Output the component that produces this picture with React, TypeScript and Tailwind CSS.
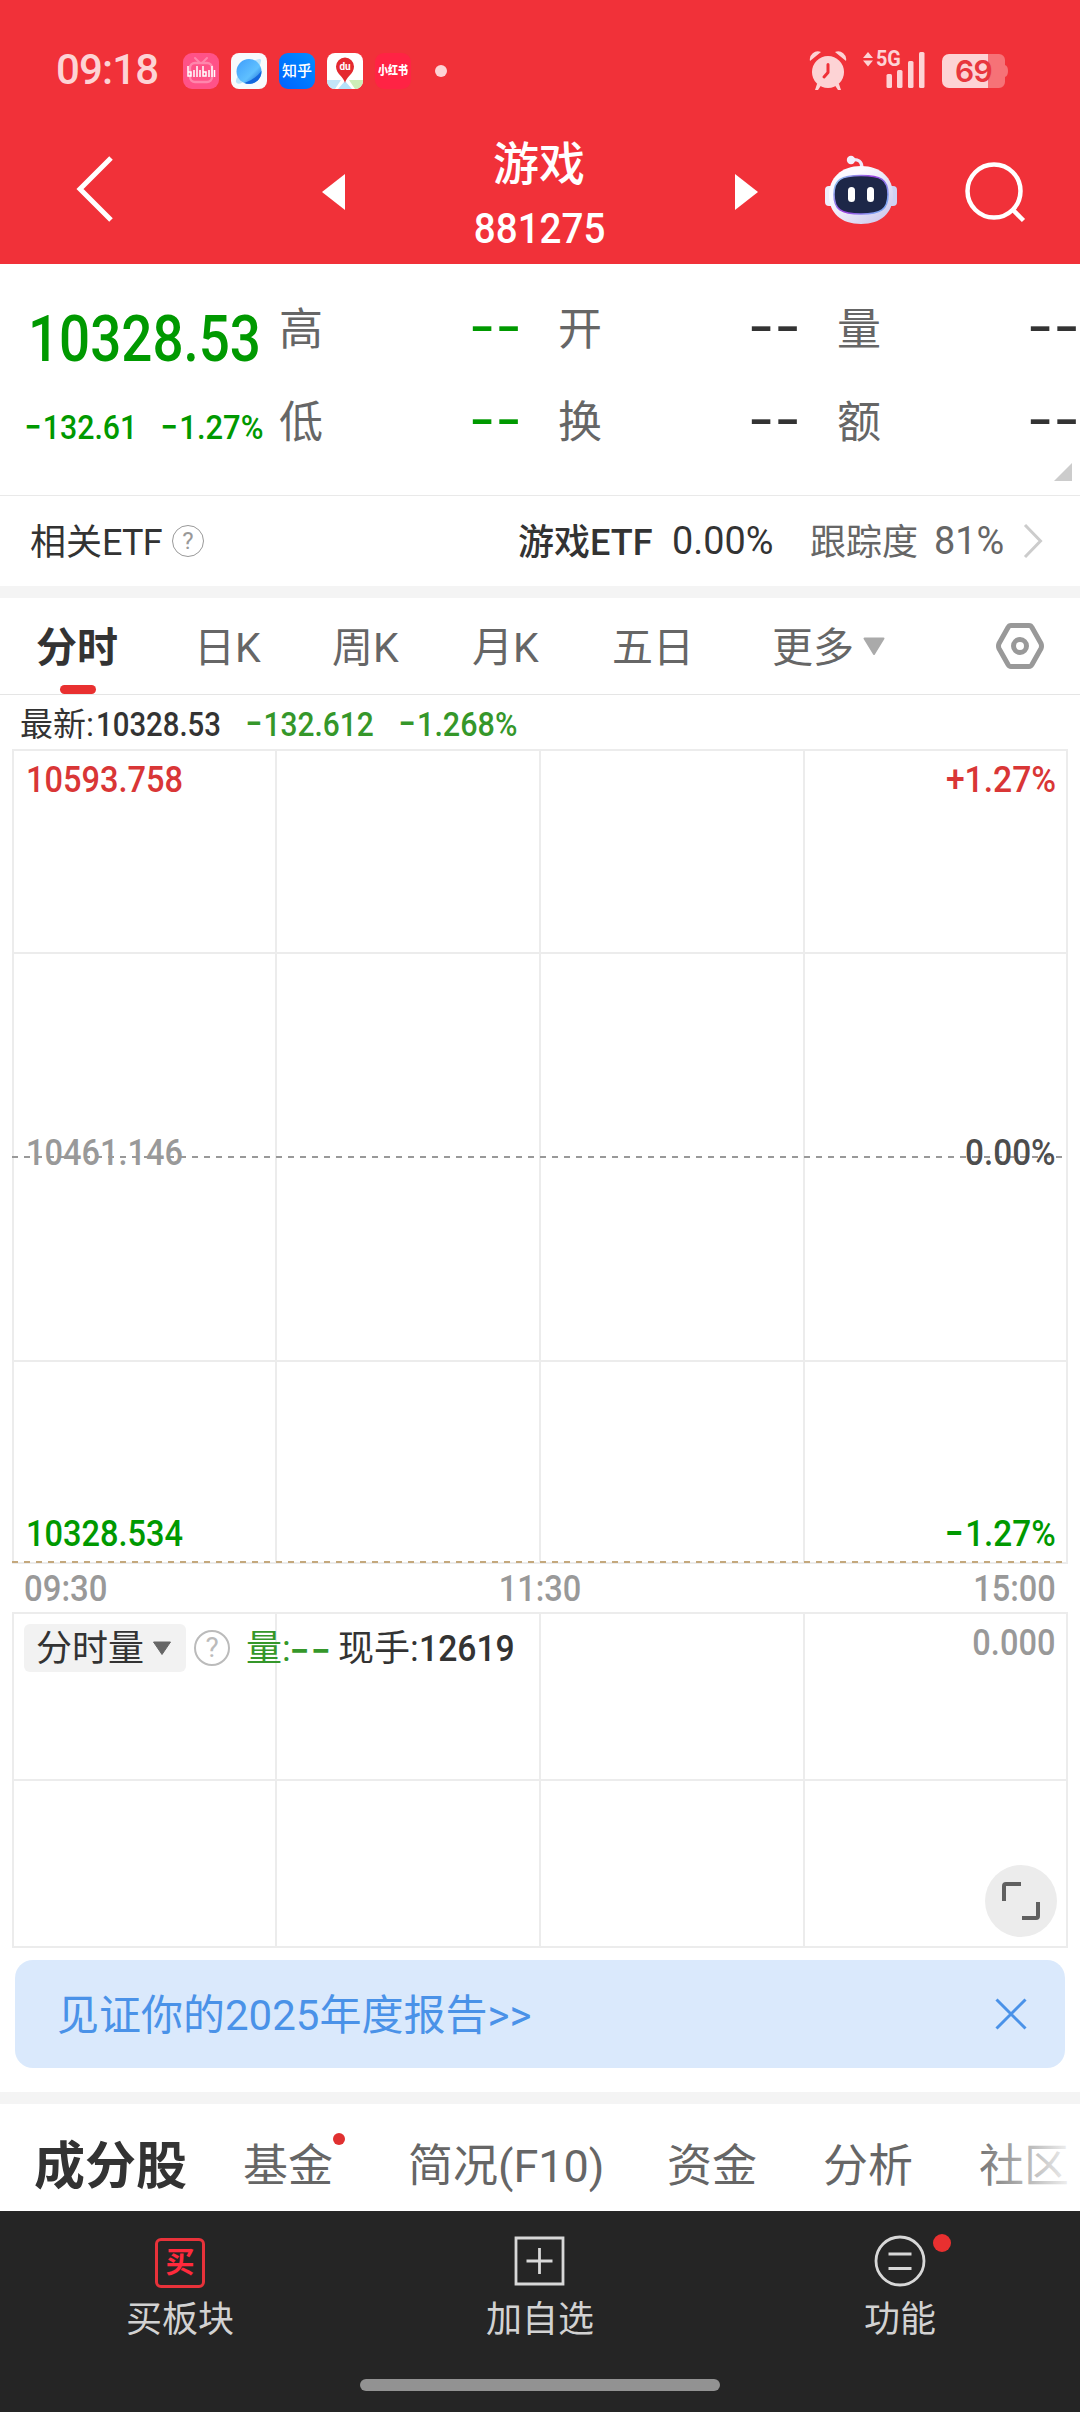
import type { ReactNode } from 'react';
import { clsx } from 'clsx';

interface NumProps {
  children: string;
  className?: string;
}

// A leading minus is drawn wider than Roboto's own hyphen
function Num({ children, className }: NumProps) {
  const signed = children.startsWith('-');
  return (
    <span className={clsx('inline-block whitespace-nowrap font-medium', className)}>
      {signed && (
        <span className="mr-[0.02em] align-[-0.08em] font-[Inter] text-[1.3em] font-normal leading-[0] [font-feature-settings:'case']">
          -
        </span>
      )}
      {signed ? children.slice(1) : children}
    </span>
  );
}

function StatusBar() {
  return (
    <div className="flex h-[142px] items-start pl-14 pr-[72px] pt-[46px] text-[#fdd3d5]">
      <span className="w-[127px] origin-left text-[42px] font-medium leading-[48px] tracking-[-0.02em]">09:18</span>
      <div className="mt-[7px] flex gap-3">
        <svg className="size-9" viewBox="0 0 36 36">
          <rect width="36" height="36" rx="9" fill="#ff5288" />
          <path d="M12 5l4 4M24 5l-4 4" stroke="#ff86ac" strokeWidth="2" strokeLinecap="round" />
          <rect x="7" y="10" width="22" height="19" rx="5" fill="none" stroke="#ff86ac" strokeWidth="2.4" />
          <path
            d="M5 13v10h3v-4H5M11 17v7M14 13v11M17 17v7M20 13v10h3v-4h-3M26 17v7M29 13v11M31.500 17v7"
            fill="none"
            stroke="#fff"
            strokeWidth="1.500"
          />
        </svg>
        <svg className="size-9" viewBox="0 0 36 36">
          <defs>
            <linearGradient id="planet" x1="0" y1="0" x2="1" y2="1">
              <stop offset="0" stopColor="#3f9dfb" />
              <stop offset="0.6" stopColor="#5fc0ff" />
              <stop offset="1" stopColor="#0a58cf" />
            </linearGradient>
          </defs>
          <rect width="36" height="36" rx="8" fill="#f8fafc" />
          <path d="M22 8q9-4 8 0q-1 8-12 17T5 29q-1-3 5-10z" fill="#b9e3fb" />
          <circle cx="18" cy="18.500" r="12.500" fill="url(#planet)" />
          <path d="M30.500 18a12.500 12.500 0 0 1-17 12q11-4 17-12z" fill="#1466dd" />
        </svg>
        <div className="flex size-9 items-center justify-center rounded-[9px] bg-gradient-to-tr from-[#0062ff] to-[#0a8cff] text-[15px] font-medium leading-none text-white">
          知乎
        </div>
        <div className="relative size-9">
          <svg className="size-9" viewBox="0 0 36 36">
            <rect width="36" height="36" rx="8" fill="#fff" />
            <path d="M0 27h14l-6 9a8 8 0 0 1-8-8z" fill="#c3e5f8" />
            <path d="M22 27h14v1a8 8 0 0 1-8 8z" fill="#cdeeb8" />
            <path d="M18 28l7 8H11z" fill="#b5e2fa" />
            <path d="M18 30c-1-6-9-9-9-16.500a9 9 0 0 1 18 0C27 21 19 24 18 30z" fill="#e4292f" />
          </svg>
          <span className="absolute inset-x-0 top-[7px] text-center text-[10px] font-bold leading-[13px] text-white">
            du
          </span>
        </div>
        <div className="flex size-9 items-center justify-center rounded-[9px] bg-[#ff2344] leading-none text-white">
          <span className="scale-y-[1.2] whitespace-nowrap text-[10px] font-black">小红书</span>
        </div>
      </div>
      <span className="ml-6 mt-[19px] size-3 rounded-full bg-current" />
      <svg className="ml-auto mt-[5px] h-10 w-[38px]" viewBox="0 0 38 40" fill="currentColor">
        <circle cx="19" cy="21" r="16" />
        <path d="M1 10a8 8 0 0 1 11-9zM37 10a8 8 0 0 0-11-9zM8 33h5l-4 6H6zM30 33h-5l4 6h3z" />
        <path
          d="M19 13.500v8l-4 4.500"
          fill="none"
          stroke="#f03138"
          strokeWidth="3"
          strokeLinecap="round"
          strokeLinejoin="round"
        />
      </svg>
      <div className="relative ml-4 mt-[5px] h-10 w-[63px]">
        <svg className="h-10 w-[63px]" viewBox="0 0 63 40" fill="currentColor">
          <path d="M0 7l5-6 5 6zM0 9.500h10l-5 6z" />
          <rect x="23.500" y="23" width="5.500" height="14" rx="1.500" />
          <rect x="34" y="19" width="5.500" height="18" rx="1.500" />
          <rect x="45" y="10" width="5.500" height="27" rx="1.500" />
          <rect x="56" y="1" width="5.500" height="36" rx="1.500" />
        </svg>
        <span className="absolute left-[13px] top-[-4px] origin-left scale-x-90 text-[22px] font-bold leading-6">
          5G
        </span>
      </div>
      <div className="relative ml-4 mt-2 h-[34px] w-[66px]">
        <svg className="h-[34px] w-[66px]" viewBox="0 0 66 34">
          <path d="M46 0h11a6 6 0 0 1 6 6v5q3 1 3 6t-3 6v5a6 6 0 0 1-6 6H46z" fill="#f67277" />
          <path d="M7 0h39v34H7a7 7 0 0 1-7-7V7a7 7 0 0 1 7-7z" fill="currentColor" />
        </svg>
        <span className="absolute left-[13px] top-0 font-[Inter] text-[30px] font-semibold leading-[35px] tracking-tight text-[#e8373e]">
          69
        </span>
      </div>
    </div>
  );
}

function TitleBar() {
  return (
    <div className="flex h-[122px] pl-[74px] text-white">
      <svg className="mt-3 h-[70px] w-10" viewBox="0 0 40 70" fill="none" stroke="currentColor" strokeWidth="5">
        <path d="M37 4L6 35l31 31" />
      </svg>
      <svg className="ml-[208px] mt-8 h-9 w-6" viewBox="0 0 24 36" fill="currentColor">
        <path d="M0 18L23 0v36z" />
      </svg>
      <div className="flex w-[388px] flex-col items-center">
        <h1 className="-mt-2 pr-[2px] text-[46px] font-medium leading-[60px]">游戏</h1>
        <Num className="scale-x-[0.92] pt-[10px] text-[42px] leading-[50px]">881275</Num>
      </div>
      <svg className="mt-8 h-9 w-6" viewBox="0 0 24 36" fill="currentColor">
        <path d="M24 18L1 0v36z" />
      </svg>
      <svg className="ml-[66px] mt-3 h-[70px] w-[74px]" viewBox="0 0 74 70">
        <defs>
          <linearGradient id="shell" x1="0" y1="0" x2="1" y2="1">
            <stop offset="0.3" stopColor="#fbfaff" />
            <stop offset="1" stopColor="#c6c2ea" />
          </linearGradient>
          <linearGradient id="rim" x1="0" y1="0" x2="1" y2="0.6">
            <stop offset="0" stopColor="#8fdcf5" />
            <stop offset="0.55" stopColor="#9a3fe0" />
            <stop offset="1" stopColor="#7fa4f2" />
          </linearGradient>
        </defs>
        <path d="M27 6q11-2 11 8" fill="none" stroke="#efe9fb" strokeWidth="3.200" />
        <circle cx="27" cy="6" r="4.200" fill="#f3effc" />
        <rect x="1" y="32" width="10" height="20" rx="4" fill="#efedfb" />
        <rect x="63" y="32" width="10" height="20" rx="4" fill="#cfd2f3" />
        <path d="M37 12c20 0 32 12 32 29 0 18-12 29-32 29S5 59 5 41c0-17 12-29 32-29z" fill="url(#shell)" />
        <path
          d="M37 21.500c20 0 27 4 27 19s-7 19.500-27 19.500-27-4.500-27-19.500 7-19 27-19z"
          fill="#1d2748"
          stroke="url(#rim)"
          strokeWidth="1.600"
        />
        <rect x="24" y="33" width="7" height="15" rx="3.500" fill="#fff" />
        <rect x="43" y="33" width="7" height="15" rx="3.500" fill="#fff" />
      </svg>
      <svg
        className="ml-[65px] mt-[14px] h-[70px] w-[66px]"
        viewBox="0 0 66 70"
        fill="none"
        stroke="currentColor"
        strokeWidth="4.500"
      >
        <circle cx="31" cy="35" r="26.500" />
        <path d="M49.500 53.500L60.500 64.500" />
      </svg>
    </div>
  );
}

const QUOTE_COLUMNS = [
  { labels: ['高', '低'], color: 'text-[#009900]' },
  { labels: ['开', '换'], color: 'text-[#333333]' },
  { labels: ['量', '额'], color: 'text-[#333333]' },
];

function Quote() {
  return (
    <section className="relative flex h-[232px] overflow-hidden border-b border-[#e9e9e9] pt-6">
      <div className="w-[279px] shrink-0 text-[#009900]">
        <div className="h-[119px] pl-7 pt-[15px]">
          <Num className="origin-left scale-x-[0.855] text-[64px] leading-[74px]">10328.53</Num>
        </div>
        <div className="flex pl-6 leading-10">
          <div className="w-[136px]">
            <Num className="origin-left scale-x-[0.89] text-[34px]">-132.61</Num>
          </div>
          <Num className="origin-left scale-x-[0.91] text-[34px]">-1.27%</Num>
        </div>
      </div>
      {QUOTE_COLUMNS.map((column) => (
        <div key={column.labels[0]} className="w-[279px] shrink-0 pr-9">
          {column.labels.map((label) => (
            <div key={label} className="mb-[17px] flex h-[76px] items-center justify-between">
              <span className="pt-2 text-[44px] text-[#666666]">{label}</span>
              <span className={clsx('font-[Inter] text-[58px] leading-[60px]', column.color)}>--</span>
            </div>
          ))}
        </div>
      ))}
      <svg className="absolute bottom-[14px] right-2 size-[18px]" viewBox="0 0 18 18">
        <path d="M18 0v18H0z" fill="#cccccc" />
      </svg>
    </section>
  );
}

function HelpIcon({ className }: { className: string }) {
  return (
    <span
      className={clsx('flex shrink-0 items-center justify-center rounded-full border-solid leading-none', className)}
    >
      ?
    </span>
  );
}

function EtfRow() {
  return (
    <section className="flex h-[90px] items-center pl-[30px] text-[36px] text-[#333333]">
      <span className="w-[142px] whitespace-nowrap pt-[3px]">
        相关<span className="tracking-[-0.02em]">ETF</span>
      </span>
      <HelpIcon className="size-8 border border-[#999999] text-[24px] text-[#999999]" />
      <span className="ml-[314px] w-[154px] whitespace-nowrap pt-[3px] font-medium">游戏ETF</span>
      <div className="w-[138px]">
        <Num className="origin-left scale-x-[0.97] text-[39px] !font-normal">0.00%</Num>
      </div>
      <span className="w-[124px] pt-[3px] text-[#666666]">跟踪度</span>
      <div className="w-[89px] text-[#666666]">
        <Num className="origin-left scale-x-[0.97] text-[39px] !font-normal">81%</Num>
      </div>
      <svg className="h-9 w-5" viewBox="0 0 20 36" fill="none" stroke="#cccccc" strokeWidth="3">
        <path d="M2 2l15.500 16L2 34" />
      </svg>
    </section>
  );
}

function PeriodTabs() {
  return (
    <nav className="flex h-[97px] border-b border-[#e5e5e5] pl-9 text-[41px] leading-[101px] text-[#666666]">
      <div className="relative w-[158px] font-bold text-[#333333]">
        分时
        <span className="absolute bottom-0 left-6 h-[9px] w-9 rounded-full bg-[#e93030]" />
      </div>
      <span className="w-[138px]">日K</span>
      <span className="w-[140px]">周K</span>
      <span className="w-[140px]">月K</span>
      <span className="w-[160px]">五日</span>
      <span className="w-[90px]">更多</span>
      <svg className="mt-[39px] h-[19px] w-6" viewBox="0 0 24 19">
        <path d="M2.500 1.500h19L12 17z" fill="#aaaaaa" stroke="#aaaaaa" strokeWidth="2" strokeLinejoin="round" />
      </svg>
      <svg
        className="ml-[109px] mt-6 h-12 w-[50px]"
        viewBox="0 0 50 48"
        fill="none"
        stroke="#999999"
        strokeWidth="5"
        strokeLinejoin="round"
      >
        <path d="M16 3.500h18q2 0 3 2l9 16q1 2.500 0 5l-9 16q-1 2-3 2H16q-2 0-3-2l-9-16q-1-2.500 0-5l9-16q1-2 3-2z" />
        <circle cx="25" cy="24" r="6.500" />
      </svg>
    </nav>
  );
}

interface GridProps {
  height: number;
  rows: number[];
}

function Grid({ height, rows }: GridProps) {
  return (
    <svg className="block size-full" viewBox={`0 0 1056 ${height}`} fill="none" stroke="#ececec" strokeWidth="2">
      <rect x="1" y="1" width="1054" height={height - 2} />
      {[264, 528, 792].map((x) => (
        <line key={x} x1={x} y1="0" x2={x} y2={height} />
      ))}
      {rows.map((y) => (
        <line key={y} x1="0" y1={y} x2="1056" y2={y} />
      ))}
    </svg>
  );
}

function DashedLine({ color }: { color: string }) {
  return (
    <svg className="block h-[2px] w-full" stroke={color} strokeWidth="2" strokeDasharray="6 6">
      <line x1="0" y1="1" x2="1054" y2="1" />
    </svg>
  );
}

function ChartLabel({ className, children }: { className: string; children: string }) {
  return (
    <span className={clsx('absolute leading-10', className)}>
      <Num className="text-[37px]">{children}</Num>
    </span>
  );
}

function Chart() {
  return (
    <section className="px-3">
      <div className="flex h-[54px] items-center pl-2 pt-[5px] text-[33px] leading-[48px] text-[#333333]">
        <span className="w-[76px] whitespace-nowrap font-normal">最新:</span>
        <div className="w-[149px]">
          <Num className="origin-left scale-x-[0.89]">10328.53</Num>
        </div>
        <div className="w-[153px] text-[#35972a]">
          <Num className="origin-left scale-x-[0.905]">-132.612</Num>
        </div>
        <Num className="origin-left scale-x-[0.925] text-[#35972a]">-1.268%</Num>
      </div>
      <div className="relative h-[815px]">
        <Grid height={815} rows={[204, 612]} />
        <div className="absolute inset-x-0 top-[407px]">
          <DashedLine color="#999999" />
        </div>
        <div className="absolute inset-x-0 bottom-px">
          <DashedLine color="#c4a87c" />
        </div>
        <ChartLabel className="left-[14px] top-[11px] origin-left scale-x-[0.88] text-[#d93636]">10593.758</ChartLabel>
        <ChartLabel className="right-3 top-[11px] origin-right scale-x-[0.91] text-[#d93636]">+1.27%</ChartLabel>
        <ChartLabel className="left-[14px] top-[384px] origin-left scale-x-[0.88] text-[#999999]">10461.146</ChartLabel>
        <ChartLabel className="right-3 top-[384px] origin-right scale-x-90 text-[#4d4d4d]">0.00%</ChartLabel>
        <ChartLabel className="left-[14px] top-[765px] origin-left scale-x-[0.88] text-[#009900]">10328.534</ChartLabel>
        <ChartLabel className="right-3 top-[765px] origin-right scale-x-90 text-[#009900]">-1.27%</ChartLabel>
      </div>
      <div className="flex h-12 items-center justify-between px-3 pt-[2px] text-[37px] leading-[48px] text-[#999999]">
        <Num className="origin-left scale-x-[0.89]">09:30</Num>
        <Num className="scale-x-[0.88]">11:30</Num>
        <Num className="origin-right scale-x-[0.88]">15:00</Num>
      </div>
      <div className="relative h-[336px]">
        <Grid height={336} rows={[168]} />
        <div className="absolute inset-x-3 top-3 flex h-12 items-center text-[36px] text-[#333333]">
          <div className="flex h-12 w-[162px] items-center rounded-md bg-[#f2f2f2] pl-3">
            <span className="pt-[2px]">分时量</span>
            <svg className="ml-2 h-[15px] w-5" viewBox="0 0 20 15">
              <path d="M1.500 1h17L10 13.500z" fill="#666666" stroke="#666666" strokeLinejoin="round" />
            </svg>
          </div>
          <HelpIcon className="ml-2 size-9 border-2 border-[#bbbbbb] text-[28px] text-[#bbbbbb]" />
          <span className="ml-4 w-[43px] whitespace-nowrap pt-[2px] text-[#35972a]">量:</span>
          <span className="w-[49px] whitespace-nowrap font-[Inter] text-[46px] leading-10 text-[#35972a]">--</span>
          <span className="whitespace-nowrap pt-[2px]">现手:</span>
          <Num className="origin-left scale-x-[0.91] pt-[2px] text-[37px]">12619</Num>
        </div>
        <ChartLabel className="right-[13px] top-[11px] origin-right scale-x-[0.88] text-[#999999]">0.000</ChartLabel>
        <div className="absolute bottom-[11px] right-[11px] flex size-[72px] items-center justify-center rounded-full bg-[#ececec]">
          <svg className="size-[38px]" viewBox="0 0 38 38" fill="none" stroke="#606060" strokeWidth="4">
            <path d="M2 19V4q0-2 2-2h15M36 20v14q0 2-2 2H20" />
          </svg>
        </div>
      </div>
    </section>
  );
}

function Banner() {
  return (
    <section className="px-[15px] pb-6 pt-3">
      <div className="flex h-[108px] items-center justify-between rounded-[18px] bg-[#dae9fc] pl-[42px] pr-[38px] text-[#4a92e8]">
        <span className="pt-[3px] text-[42px] leading-none">见证你的2025年度报告&gt;&gt;</span>
        <svg className="size-8" viewBox="0 0 32 32" fill="none" stroke="currentColor" strokeWidth="3">
          <path d="M1.500 1.500l29 29M30.500 1.500l-29 29" />
        </svg>
      </div>
    </section>
  );
}

function SectionTabs() {
  return (
    <nav className="relative flex h-[107px] overflow-hidden whitespace-nowrap pl-[34px] text-[45px] leading-[126px] text-[#666666]">
      <span className="w-[209px] text-[51px] font-bold text-[#333333]">成分股</span>
      <span className="relative w-[165px]">
        基金
        <i className="absolute left-[90px] top-[29px] size-3 rounded-full bg-[#e03030]" />
      </span>
      <span className="w-[259px]">简况(F10)</span>
      <span className="w-[156px]">资金</span>
      <span className="w-[156px]">分析</span>
      <span>社区</span>
      <div className="absolute right-0 top-0 h-full w-28 bg-gradient-to-r from-white/0 to-white" />
    </nav>
  );
}

function BottomItem({ icon, label }: { icon: ReactNode; label: string }) {
  return (
    <div className="flex w-[360px] flex-col items-center pt-6">
      {icon}
      <span className="mt-[6px] text-[36px] leading-[54px]">{label}</span>
    </div>
  );
}

function BottomBar() {
  return (
    <footer className="h-[201px] bg-[#252525] text-[#d2d2d2]">
      <div className="flex h-[168px]">
        <BottomItem
          label="买板块"
          icon={
            <div className="mb-[-1px] mt-[3px] flex size-[50px] items-center justify-center rounded-md border-[3px] border-[#e8323a] text-[29px] font-bold leading-none text-[#ff2a3c]">
              买
            </div>
          }
        />
        <BottomItem
          label="加自选"
          icon={
            <svg className="size-[52px]" viewBox="0 0 52 52" fill="none" stroke="#d8d8d8" strokeWidth="2.800">
              <path d="M2 3h47v46H2zM25.500 13v26M12.500 26h26" />
            </svg>
          }
        />
        <BottomItem
          label="功能"
          icon={
            <div className="relative size-[52px]">
              <svg className="size-[52px]" viewBox="0 0 52 52" fill="none" stroke="#d8d8d8" strokeWidth="2.800">
                <circle cx="26" cy="26" r="24" />
                <path d="M14.500 19h23M14.500 33.500h23" />
              </svg>
              <i className="absolute -right-[25px] -top-px size-[18px] rounded-full bg-[#e93030]" />
            </div>
          }
        />
      </div>
      <div className="mx-auto h-3 w-[360px] rounded-full bg-[#929292]" />
    </footer>
  );
}

export default function App() {
  return (
    <div className="h-[2412px] w-[1080px] overflow-hidden bg-white font-[Roboto,'Noto_Sans_CJK_SC',sans-serif]">
      <header className="h-[264px] bg-[#f13139]">
        <StatusBar />
        <TitleBar />
      </header>
      <Quote />
      <EtfRow />
      <div className="h-3 bg-[#f4f4f4]" />
      <PeriodTabs />
      <Chart />
      <Banner />
      <div className="h-3 bg-[#f4f4f4]" />
      <SectionTabs />
      <BottomBar />
    </div>
  );
}
